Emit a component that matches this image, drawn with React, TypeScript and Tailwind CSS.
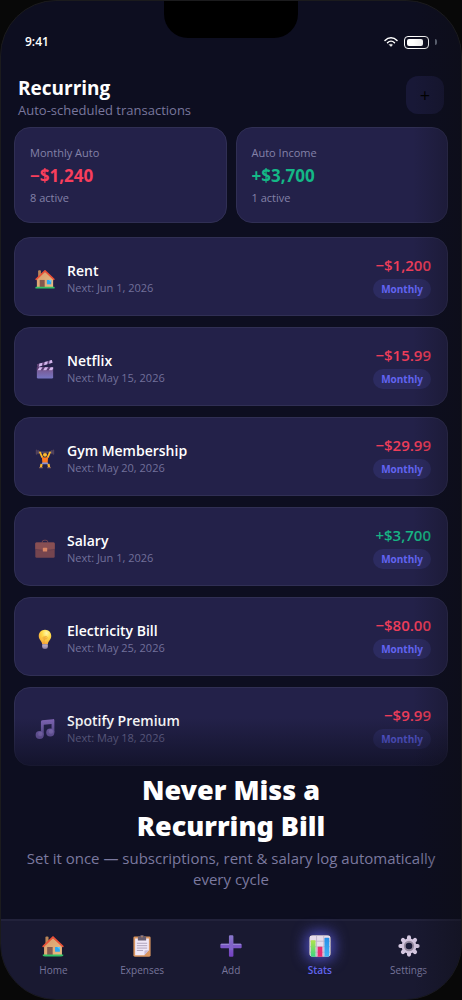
import React, { useState } from 'react';

type IconProps = { className?: string };

const HouseIcon: React.FC<IconProps> = ({ className }) => (
  <svg className={className} viewBox="0 0 32 32" aria-hidden="true">
    <defs>
      <linearGradient id="wall" x1="0" y1="0" x2="1" y2="1">
        <stop offset="0" stopColor="#d89a6a" />
        <stop offset="1" stopColor="#e8bd86" />
      </linearGradient>
    </defs>
    <path d="M5 3.500A1.500 1.500 0 0 1 6.500 2H8a1.500 1.500 0 0 1 1.500 1.500V14H5Z" fill="#b98558" />
    <path d="M3 15 16 4l13 11v15H3Z" fill="url(#wall)" />
    <path d="M7.500 17.500h8V30h-8Z" fill="#83584f" />
    <path d="M19 17.500h7v7h-7Z" fill="#2aa8f2" />
    <path d="M22 17.500h4v4Z" fill="#63c9fb" />
    <path d="M1.800 16.500 16 3l14.200 13.500" fill="none" stroke="#ea5138" strokeWidth="2.600" strokeLinecap="round" strokeLinejoin="round" />
    <rect x="0.500" y="28.500" width="31" height="2.800" rx="1.400" fill="#33c266" />
  </svg>
);

const ClapperIcon: React.FC<IconProps> = ({ className }) => (
  <svg className={className} viewBox="0 0 32 32" aria-hidden="true">
    <defs>
      <linearGradient id="board" x1="0" y1="0" x2="0" y2="1">
        <stop offset="0" stopColor="#7a5387" />
        <stop offset="1" stopColor="#7675c2" />
      </linearGradient>
    </defs>
    <path d="M3 8.500 27 1.500l1 4.500L4 13Z" fill="#65467b" />
    <path d="m7 7.300 5-1.400-1 5-5 1.400ZM15.500 4.900l5-1.500-1 5-5 1.500ZM23.500 2.500l3.500-1 1 4.500-5.500 1.600Z" fill="#d2b7ec" />
    <path d="M3 13h26v16a2 2 0 0 1-2 2H5a2 2 0 0 1-2-2Z" fill="url(#board)" />
    <path d="M3 13h26v5H3Z" fill="#5a3c72" />
    <path d="M7 13h5l-3 5H4ZM16 13h5l-3 5h-5ZM25 13h4v2.500L27.500 18H22Z" fill="#d2b7ec" />
  </svg>
);

const LifterIcon: React.FC<IconProps> = ({ className }) => (
  <svg className={className} viewBox="0 0 32 32" aria-hidden="true">
    <path d="M4 5h24" stroke="#8b8392" strokeWidth="1" />
    <path d="M2.500 2v6M29.500 2v6" stroke="#51425b" strokeWidth="2.500" strokeLinecap="round" />
    <path d="M5 2.500v5M27 2.500v5" stroke="#6a5568" strokeWidth="1.600" strokeLinecap="round" />
    <path d="M8 5.500 11.500 13M24 5.500 20.500 13" stroke="#fbb72d" strokeWidth="3" strokeLinecap="round" />
    <circle cx="16" cy="9" r="3.200" fill="#fcbc2e" />
    <path d="M12.700 7.500c.5-3 6-3 6.600 0-2-1-4.500-1-6.600 0Z" fill="#6b4650" />
    <path d="M11 12.500c3 1.200 7 1.200 10 0l-.8 10h-8.400Z" fill="#ff7c20" />
    <path d="M11.800 21.500h8.400l1.800 3h-12Z" fill="#8a8fd0" />
    <path d="M10.500 24 9.500 29M21.500 24l1 5" stroke="#fbb72d" strokeWidth="3.600" />
    <path d="M7.500 29.800h4M20.500 29.800h4" stroke="#91695c" strokeWidth="2" strokeLinecap="round" />
  </svg>
);

const BriefcaseIcon: React.FC<IconProps> = ({ className }) => (
  <svg className={className} viewBox="0 0 32 32" aria-hidden="true">
    <path d="M11.500 6V5a3 3 0 0 1 3-3h3a3 3 0 0 1 3 3v1" fill="none" stroke="#704350" strokeWidth="1.600" />
    <rect x="0.500" y="5.500" width="31" height="24.500" rx="2" fill="#75454f" />
    <path d="M.5 7.500a2 2 0 0 1 2-2h27a2 2 0 0 1 2 2V16c-9 2-22 2-31 0Z" fill="#884f53" />
    <path d="M.5 16.500c9 2 22 2 31 0" fill="none" stroke="#633d4d" strokeWidth="1" />
    <rect x="12.500" y="14" width="7" height="6" rx="1" fill="#d98665" />
  </svg>
);

const BulbIcon: React.FC<IconProps> = ({ className }) => (
  <svg className={className} viewBox="0 0 32 32" aria-hidden="true">
    <defs>
      <radialGradient id="glass" cx=".62" cy=".25" r=".75">
        <stop offset="0" stopColor="#fff6a8" />
        <stop offset=".45" stopColor="#ffdc4a" />
        <stop offset="1" stopColor="#f7a83a" />
      </radialGradient>
    </defs>
    <path d="M11.500 23h9v5.500a3 3 0 0 1-3 3h-3a3 3 0 0 1-3-3Z" fill="#9e8fae" />
    <path d="M11.500 27h9" stroke="#d2c7dc" strokeWidth="1" />
    <path d="M16 1C10 1 6 5.500 6 11c0 6 4.500 7 5.500 13h9C21.500 18 26 17 26 11c0-5.500-4-10-10-10Z" fill="url(#glass)" />
    <path d="M14.500 24v-7.500a2 2 0 1 0-2-2 2 2 0 0 0 2 1.500h3a2 2 0 1 0-2-2" fill="none" stroke="#ef9f38" strokeWidth="1.200" />
  </svg>
);

const NotesIcon: React.FC<IconProps> = ({ className }) => (
  <svg className={className} viewBox="0 0 32 32" aria-hidden="true">
    <defs>
      <linearGradient id="note" x1="0" y1="0" x2="0" y2="1">
        <stop offset="0" stopColor="#8065b5" />
        <stop offset="1" stopColor="#6759a1" />
      </linearGradient>
    </defs>
    <path d="M9.500 4.500A2.500 2.500 0 0 1 11.600 2l17-1.800A2.200 2.200 0 0 1 31 2.400V21h-4.500V8L14 9.300V26H9.500Z" fill="url(#note)" />
    <circle cx="7.500" cy="25.500" r="6.500" fill="#7661b0" />
    <circle cx="24.500" cy="21.500" r="6.500" fill="#7661b0" />
    <circle cx="8.500" cy="24" r="3.500" fill="#8b75c1" />
    <circle cx="25.500" cy="20" r="3.500" fill="#8b75c1" />
  </svg>
);

const ClipboardIcon: React.FC<IconProps> = ({ className }) => (
  <svg className={className} viewBox="0 0 32 32" aria-hidden="true">
    <rect x="3.500" y="2" width="25" height="29.500" rx="2" fill="#d9955f" />
    <path d="M6 5h20v17l-6.500 7.500H6Z" fill="#f0e8f7" />
    <path d="M26 22v7.500h-6.500Z" fill="#d9955f" />
    <path d="M19.500 29.500V24a2 2 0 0 1 2-2H26Z" fill="#c9bcd8" />
    <path d="M8.500 12h15M8.500 15.500h15M8.500 19h15M8.500 22.500h9" stroke="#a79cb4" strokeWidth="1.300" />
    <path d="M10 3.500A1.500 1.500 0 0 1 11.500 2h2a2.500 2.500 0 0 1 5 0h2A1.500 1.500 0 0 1 22 3.500V8H10Z" fill="#685e70" />
    <circle cx="16" cy="2.500" r="1" fill="#d9955f" />
  </svg>
);

const PlusIcon: React.FC<IconProps> = ({ className }) => (
  <svg className={className} viewBox="0 0 32 32" aria-hidden="true">
    <defs>
      <linearGradient id="plus" x1="0" y1="0" x2="0" y2="1">
        <stop offset="0" stopColor="#8879cb" />
        <stop offset="1" stopColor="#7440c2" />
      </linearGradient>
    </defs>
    <rect x="13" y="0.500" width="6.500" height="31" rx="1.500" fill="url(#plus)" />
    <rect x="0.500" y="12.800" width="31" height="6.500" rx="1.500" fill="#7c58c7" />
    <path d="M2 13.600h28" stroke="#9486d1" strokeWidth="1.600" strokeLinecap="round" />
    <rect x="13.500" y="10" width="5.500" height="12" fill="#8064c8" />
  </svg>
);

const ChartIcon: React.FC<IconProps> = ({ className }) => (
  <svg className={className} viewBox="0 0 32 32" aria-hidden="true">
    <defs>
      <linearGradient id="barGreen" x1="0" y1="0" x2="0" y2="1">
        <stop offset="0" stopColor="#b2e34b" />
        <stop offset="1" stopColor="#3ed482" />
      </linearGradient>
      <linearGradient id="barBlue" x1="0" y1="0" x2="0" y2="1">
        <stop offset="0" stopColor="#258ee8" />
        <stop offset="1" stopColor="#42b4f4" />
      </linearGradient>
    </defs>
    <rect x="0.500" y="0.500" width="31" height="31" rx="3" fill="#e6dcec" />
    <path d="M1 9h30M1 17h30M1 25h30M11 1v30M21.500 1v30" stroke="#bcb0c6" strokeWidth="1.200" />
    <path d="M2.500 8.500a1 1 0 0 1 1-1h5a1 1 0 0 1 1 1v23h-7Z" fill="url(#barGreen)" />
    <path d="M12.500 18a1 1 0 0 1 1-1h5a1 1 0 0 1 1 1v13.500h-7Z" fill="#e72e70" />
    <path d="M22.500 5a1 1 0 0 1 1-1h5a1 1 0 0 1 1 1v26.500h-7Z" fill="url(#barBlue)" />
  </svg>
);

const GearIcon: React.FC<IconProps> = ({ className }) => (
  <svg className={className} viewBox="0 0 32 32" aria-hidden="true">
    <g stroke="#d5c8e1" strokeWidth="6" strokeLinecap="round">
      <path d="M16 3.500v25M3.500 16h25M7.200 7.200l17.600 17.600M24.800 7.200 7.200 24.800" />
    </g>
    <circle cx="16" cy="16" r="10.800" fill="#d2c4dd" />
    <circle cx="16" cy="16" r="7.500" fill="#94899e" />
    <circle cx="16" cy="16" r="4.800" fill="#1b1b38" />
  </svg>
);

const WifiIcon: React.FC<IconProps> = ({ className }) => (
  <svg className={className} viewBox="0 0 28 20" fill="none" stroke="#fff" strokeLinecap="round" aria-hidden="true">
    <path d="M2 7C9-.2 19-.2 26 7" strokeWidth="3" />
    <path d="M7 11.500c4-4 10-4 14 0" strokeWidth="3" />
    <path d="m11 15.500 3 3.500 3-3.500c-1.800-1.500-4.200-1.500-6 0Z" fill="#fff" strokeWidth="1" />
  </svg>
);

const items = [
  { name: 'Rent', next: 'Jun 1, 2026', amount: '−$1,200', icon: HouseIcon },
  { name: 'Netflix', next: 'May 15, 2026', amount: '−$15.99', icon: ClapperIcon },
  { name: 'Gym Membership', next: 'May 20, 2026', amount: '−$29.99', icon: LifterIcon },
  { name: 'Salary', next: 'Jun 1, 2026', amount: '+$3,700', icon: BriefcaseIcon },
  { name: 'Electricity Bill', next: 'May 25, 2026', amount: '−$80.00', icon: BulbIcon },
  { name: 'Spotify Premium', next: 'May 18, 2026', amount: '−$9.99', icon: NotesIcon },
];

const tabs = [
  { label: 'Home', icon: HouseIcon },
  { label: 'Expenses', icon: ClipboardIcon },
  { label: 'Add', icon: PlusIcon },
  { label: 'Stats', icon: ChartIcon },
  { label: 'Settings', icon: GearIcon },
];

const StatusBar: React.FC = () => (
  <div className="flex items-center justify-between px-6 pt-[31px] text-white">
    <span className="text-xs leading-5 font-semibold">9:41</span>
    <div className="flex items-center">
      <WifiIcon className="mr-1.5 h-2.5 w-3.5" />
      <div className="h-[13px] w-[25px] rounded border border-white p-0.5">
        <div className="h-full w-4 rounded-xs bg-white" />
      </div>
      <div className="ml-1.5 h-1.5 w-0.5 rounded-r bg-gray-500" />
    </div>
  </div>
);

const SummaryCard: React.FC<{ title: string; amount: string; note: string }> = ({ title, amount, note }) => (
  <div className="rounded-2xl border border-[#302f54] bg-[#232149] px-[15px] py-4 text-[#8482a8]">
    <p className="text-[11px] leading-[18px]">{title}</p>
    <p className={`text-[17px] leading-7 font-bold ${amount.startsWith('+') ? 'text-[#14b886]' : 'text-[#f83e5c]'}`}>
      {amount}
    </p>
    <p className="text-[11px] leading-4">{note}</p>
  </div>
);

const App: React.FC = () => {
  const [activeTab, setActiveTab] = useState('Stats');

  return (
    <div className="min-h-screen bg-[#080808] font-['Open_Sans','Noto_Sans',sans-serif]">
      <div className="relative flex min-h-screen flex-col overflow-hidden rounded-[56px] border border-[#1b1b1d] bg-[#0d0e20]">
        {/* Notch */}
        <div className="absolute top-0 left-1/2 h-[37px] w-[134px] -translate-x-1/2 rounded-b-3xl bg-black" />

        <StatusBar />

        <header className="flex items-start justify-between px-[17px] pt-6">
          <div>
            <h1 className="text-[19px] leading-6 font-bold text-white">Recurring</h1>
            <p className="text-[13px] leading-5 text-[#79779d]">Auto-scheduled transactions</p>
          </div>
          <button
            type="button"
            aria-label="Add recurring transaction"
            className="h-[38px] w-[38px] rounded-xl bg-[#181837] text-lg text-black"
          >
            +
          </button>
        </header>

        <main className="px-[13px] pt-[7px]">
          <div className="grid grid-cols-2 gap-[9px]">
            <SummaryCard title="Monthly Auto" amount="−$1,240" note="8 active" />
            <SummaryCard title="Auto Income" amount="+$3,700" note="1 active" />
          </div>

          {/* List, fades out at the bottom */}
          <div className="relative pt-3.5">
            <ul className="flex flex-col gap-[11px]">
              {items.map(({ name, next, amount, icon: Icon }) => (
                <li
                  key={name}
                  className="flex items-center justify-between rounded-2xl border border-[#302f54] bg-[#232149] px-4 py-4"
                >
                  <div className="flex items-center pt-1">
                    <Icon className="mx-1 h-5 w-5" />
                    <div className="ml-2">
                      <p className="text-sm leading-[18px] font-semibold text-white">{name}</p>
                      <p className="text-[11px] leading-4 text-[#72709a]">Next: {next}</p>
                    </div>
                  </div>
                  <div className="flex flex-col items-end gap-[3px]">
                    <span
                      className={`text-[15px] leading-[22px] font-semibold ${amount.startsWith('+') ? 'text-[#17b484]' : 'text-[#ed3d5a]'}`}
                    >
                      {amount}
                    </span>
                    <span className="rounded-full bg-[#2c2b60] px-2 text-[10px] leading-5 font-bold text-[#6264f1]">
                      Monthly
                    </span>
                  </div>
                </li>
              ))}
            </ul>
            <div className="pointer-events-none absolute inset-x-0 bottom-0 h-12 bg-linear-to-b from-transparent to-[#0d0e20]/70" />
          </div>
        </main>

        <section className="px-6 pt-1.5 text-center">
          <h2 className="font-['Noto_Sans','Open_Sans',sans-serif] text-[27px] leading-9 font-black text-white">
            Never Miss a
            <br />
            Recurring Bill
          </h2>
          <p className="mt-1 text-[15px] leading-[21px] text-[#7b799f]">
            Set it once — subscriptions, rent &amp; salary log automatically every cycle
          </p>
        </section>

        <nav className="mt-auto grid h-20 grid-cols-5 border-t-2 border-[#22223b] bg-[#191931] px-2">
          {tabs.map(({ label, icon: Icon }) => (
            <button
              key={label}
              type="button"
              onClick={() => setActiveTab(label)}
              className="flex flex-col items-center pt-3.5"
            >
              <Icon
                className={`h-[22px] w-[22px] rounded-sm ${activeTab === label ? 'shadow-[0_0_14px_3px_#4d4dbd]' : ''}`}
              />
              <span
                className={`mt-1 text-[10px] leading-[18px] ${activeTab === label ? 'font-semibold text-[#6265f0]' : 'text-[#77759a]'}`}
              >
                {label}
              </span>
            </button>
          ))}
        </nav>

        {/* Shade along the right edge */}
        <div className="pointer-events-none absolute inset-y-0 right-0 w-12 bg-linear-to-r from-transparent to-[#0d0d12]/40" />
      </div>
    </div>
  );
};

export default App;
